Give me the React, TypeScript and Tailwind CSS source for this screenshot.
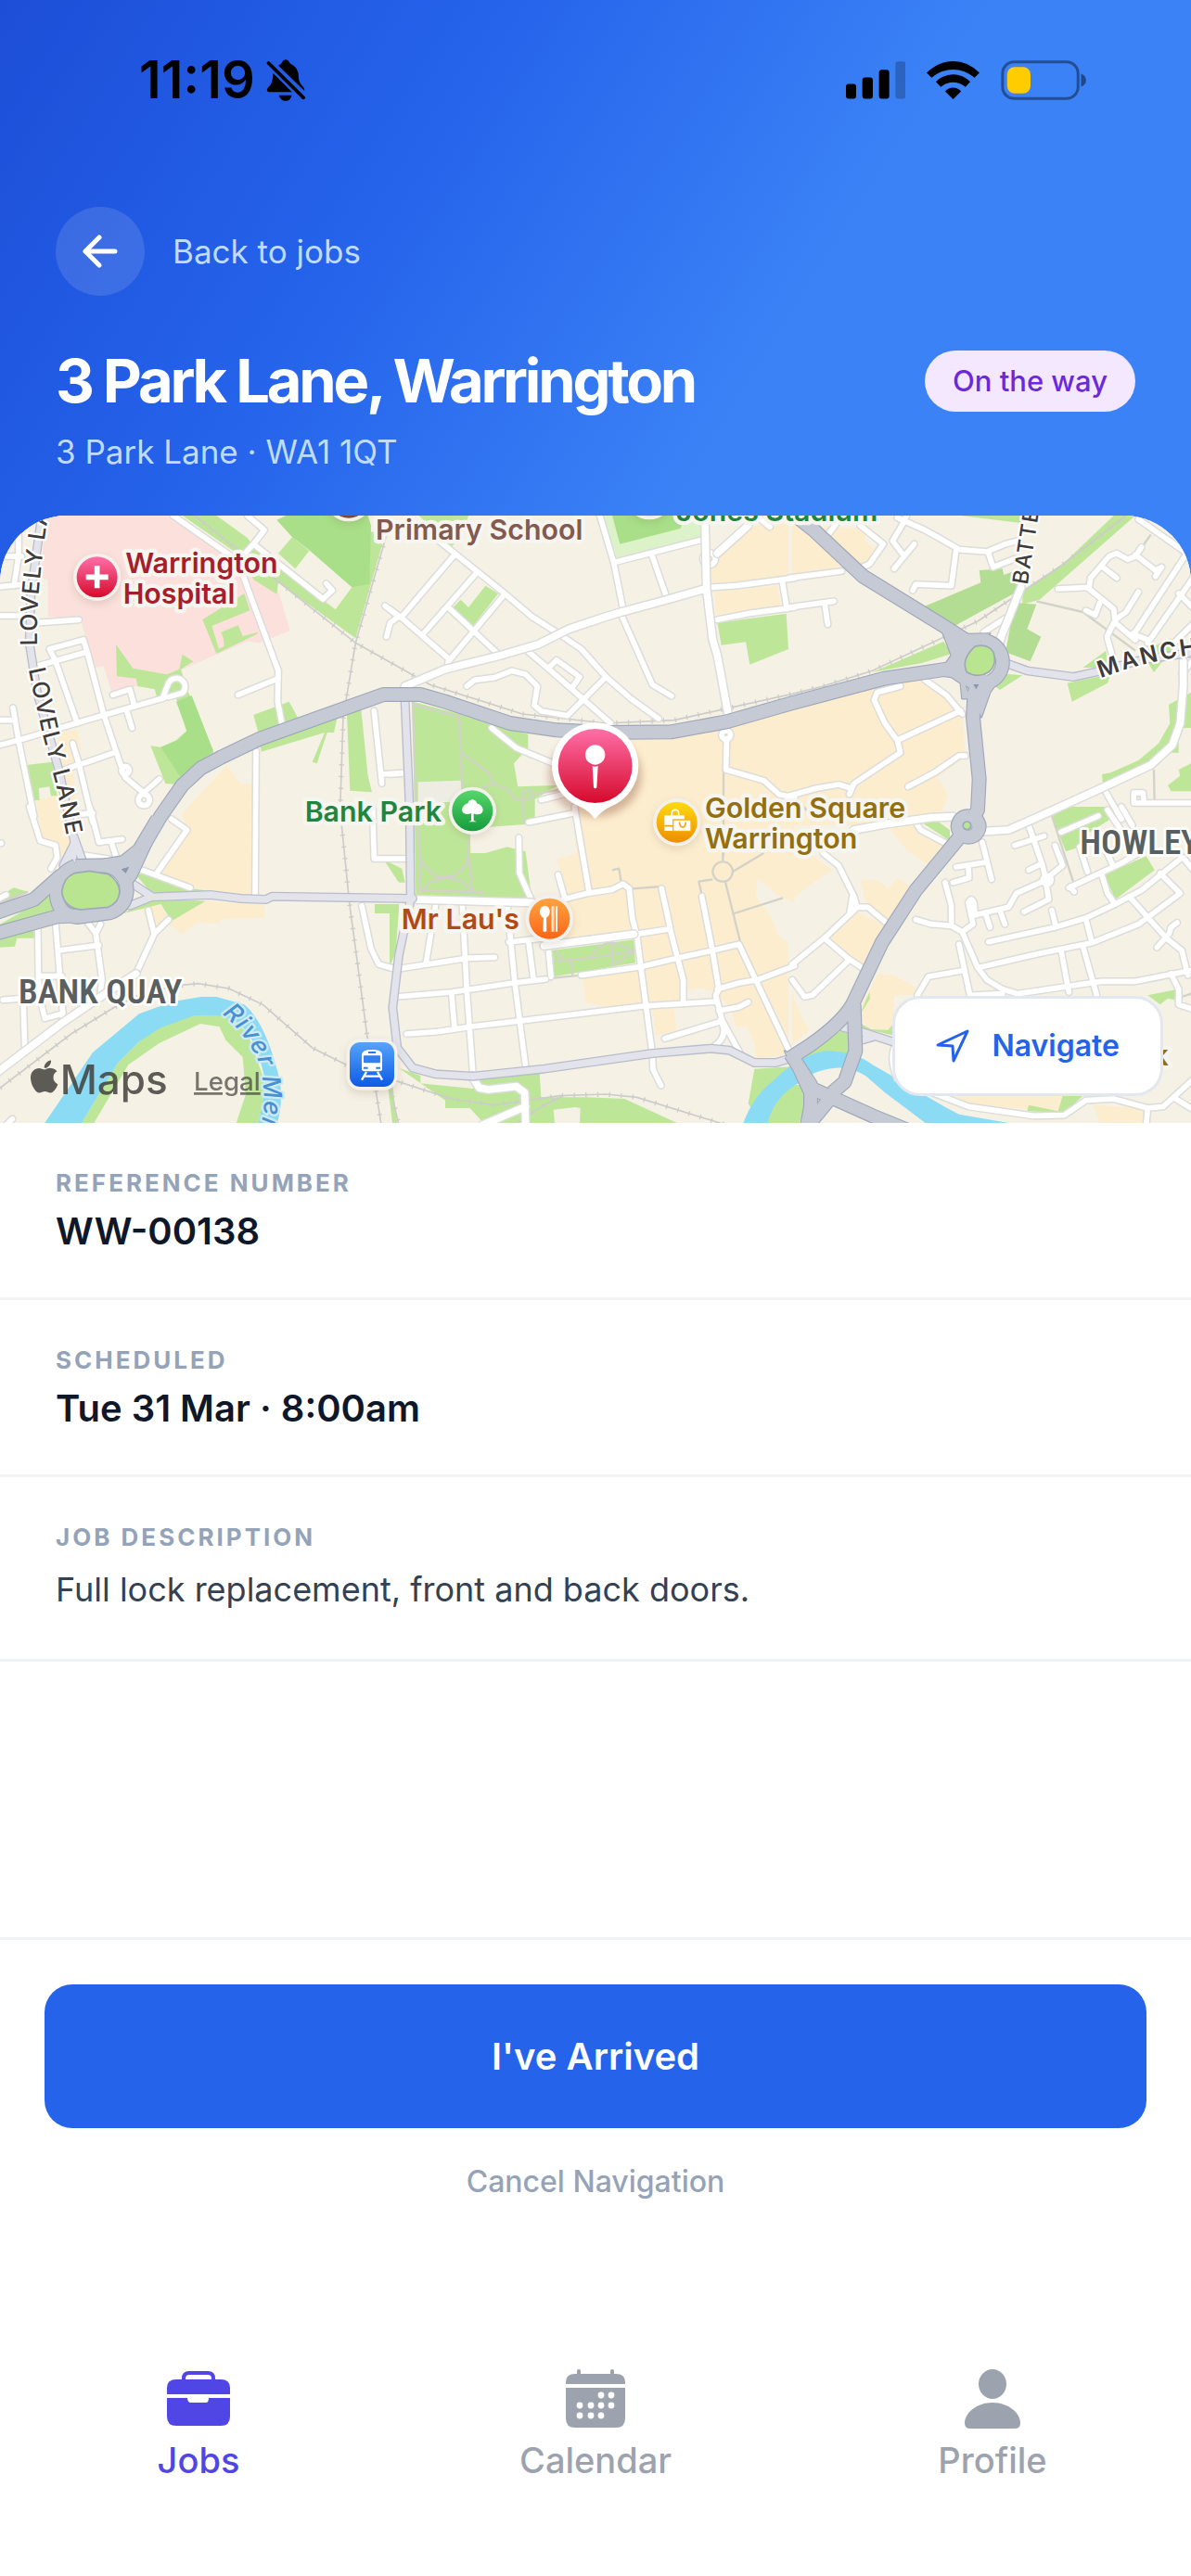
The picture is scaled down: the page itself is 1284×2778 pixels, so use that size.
import type { ReactNode } from "react";
import { FaApple } from "react-icons/fa";

/* ------------------------------------------------------------------ */
/* Map data. The map is split in six sheets; each path is expressed in */
/* the coordinates of its own sheet.                                   */
/* ------------------------------------------------------------------ */

type Sheet = "A" | "B" | "C" | "D" | "E" | "F";
type Shape = [Sheet, string];

const SHEETS: Record<Sheet, string> = {
  A: "translate(0 0)",
  B: "translate(1260 0)",
  C: "translate(2562 0)",
  D: "translate(0 990)",
  E: "translate(1260 990)",
  F: "translate(2562 990)",
};

const hospitalGround: Shape[] = [
  ["A", "M150 48L560 48L770 200L900 290L938 420L840 460L800 455L590 545L540 562L430 545L445 600L360 615L335 535L305 540L265 400L255 380L155 375L155 255L130 250Z"],
];

const commercial: Shape[] = [
  ["A", "M190 750L250 740L262 805L235 850L250 1020L120 1020L115 970L180 955Z"],
  ["A", "M735 855L775 915L815 915L815 1275L700 1275L500 1205L600 1060L590 1010Z"],
  ["D", "M440 320L520 320L545 360L665 305L855 315L855 360L718 362L712 378L640 375L587 412L555 385L500 380Z"],
  ["D", "M120 0L190 0L240 100L205 185L175 120L130 115Z"],
  ["B", "M1050 190L1160 85L1290 60L1290 250L1045 275L1035 235Z"],
  ["B", "M1050 295L1255 275L1265 340L1055 370Z"],
  ["B", "M560 770L780 775L920 765L1302 675L1302 1020L600 1010Z"],
  ["C", "M0 48L60 90L160 215L0 240Z"],
  ["C", "M80 85L240 90L235 130L265 155L245 200L180 215L90 110Z"],
  ["C", "M-10 680L280 600L430 580L500 630L550 690L560 830L470 895L505 955L480 1010L-10 1020Z"],
  ["E", "M540 170L605 150L590 0L1310 0L1310 310L1260 290L1190 230L1185 290L1230 350L1260 420L1290 440L1290 800L1185 815L1180 765L1155 712L1120 712L1105 655L1055 600L1000 585L950 600L950 630L830 640L690 645L635 632L625 550L810 520L800 415L520 450L580 300Z"],
  ["E", "M850 655L920 655L928 725L862 740Z"],
  ["F", "M315 70L400 50L510 120L450 195L370 140Z"],
  ["F", "M0 0L480 0L470 30L250 60L0 60Z"],
  ["F", "M0 110L130 205L60 250L0 300Z"],
  ["F", "M220 235L280 240L310 265L340 230L395 265L310 380L240 310Z"],
  ["F", "M125 425L210 340L300 385L230 520L180 490Z"],
  ["F", "M280 540L330 545L400 585L400 610L330 610L330 700L310 722L255 720L220 690L225 640Z"],
  ["F", "M480 935L880 935L860 985L570 965Z"],
  ["F", "M975 965L1140 975L1135 1023L995 1023Z"],
  ["F", "M0 600L30 680L55 720L0 770Z"],
];

const paleGreens: Shape[] = [
  ["B", "M690 48L1015 48L1015 120L730 190Z"],
];

const greens: Shape[] = [
  ["A", "M590 48L700 48L800 120L830 160L1085 352L1138 280L1200 100L1245 110L1150 445L900 265L895 302L820 255L780 180Z"],
  ["A", "M945 118L1000 162L955 220L900 170Z"],
  ["A", "M655 385L790 300L808 355L685 405L708 480L725 470L722 445L715 425L770 403L785 438L835 425L830 432L700 495Z"],
  ["A", "M375 465L430 542L540 562L580 545L590 497L625 520L585 545L605 610L690 810L690 830L590 890L570 918L535 915L487 793L520 797L570 775L603 745L570 640L510 645L500 610L445 600L440 575L378 568Z"],
  ["A", "M820 693L935 650L965 705L1090 705L1080 750L1058 750L1025 850L1010 845L1050 750L845 812L835 750Z"],
  ["A", "M1122 690L1168 675L1190 890L1203 943L1132 938Z"],
  ["A", "M85 855L170 845L185 955L165 955L160 925L125 930L128 968L112 970Z"],
  ["A", "M500 1020L580 910L600 930L540 1020Z"],
  ["B", "M75 650L225 690L330 725L448 755L448 800L402 850L415 925L545 920L470 965L470 1045L260 1060L262 1140L310 1140L380 1120L440 1135L460 1290L85 1290Z"],
  ["B", "M230 320L255 345L310 275L352 300L270 405L205 345Z"],
  ["B", "M1060 395L1283 365L1290 480L1165 530L1152 457L1073 467Z"],
  ["B", "M95 48L255 48L240 100L200 150Z"],
  ["C", "M545 48L740 48L740 72Z"],
  ["C", "M1040 48L1110 48L800 320L745 335L745 295L870 210Z"],
  ["C", "M260 555L490 455L515 495L420 525Z"],
  ["C", "M655 600L690 560L745 565L672 612Z"],
  ["C", "M890 590L1030 560L1020 590L905 650Z"],
  ["C", "M940 540L1015 485L1020 540Z"],
  ["C", "M1130 490L1225 445L1230 480L1170 555Z"],
  ["C", "M1218 660L1290 620L1290 735L1250 735L1250 815L1215 815L1100 880L1005 920L1002 885L1030 880L1120 840L1185 785L1222 720Z"],
  ["C", "M1215 920L1255 890L1250 870L1290 850L1290 940L1225 940Z"],
  ["D", "M0 380L165 285L175 335L0 400Z"],
  ["D", "M30 270L45 262L90 275L0 320L0 300Z"],
  ["D", "M0 420L115 385L112 425L55 425L48 452L0 455Z"],
  ["D", "M435 215L470 220L620 265L700 275L500 290Z"],
  ["D", "M400 345L520 315L555 370L665 305L480 295Z"],
  ["D", "M1212 315L1290 315L1290 345L1212 345Z"],
  ["D", "M465 90L525 0L545 0L480 80Z"],
  ["D", "M1255 910L1270 900L1285 1030L1270 1030Z"],
  ["D", "M260 1030L380 830L450 760L520 700L630 660L710 660L800 730L860 900L835 1030L762 1030L795 930L785 810L730 755L710 712L648 702L515 765L415 835L300 1030Z"],
  ["E", "M525 465L790 430L795 505L530 550Z"],
  ["E", "M0 320L30 330L20 470L0 520Z"],
  ["E", "M-20 170L40 200L50 245L30 245Z"],
  ["E", "M30 845L100 870L100 895L270 912L285 880L485 860L490 940L640 940L760 945L945 1030L615 1030L617 975L600 972L530 980L535 1030L310 1030L260 975L180 975L180 950Z"],
  ["E", "M1180 848L1310 840L1310 1030L1200 1030L1160 960Z"],
  ["F", "M840 30L900 0L1010 0L1030 40L950 90L930 130L885 145Z"],
  ["F", "M1010 220L1145 160L1172 205L1045 300Z"],
  ["F", "M410 45L460 40L510 75L510 110Z"],
  ["F", "M25 815L80 760L160 725L190 730L190 800Z"],
  ["F", "M220 700L255 720L310 722L330 700L330 740L220 715Z"],
  ["F", "M1150 610L1240 592L1238 625L1215 620L1190 640Z"],
  ["F", "M765 965L860 985L875 935L940 935L880 990L760 985Z"],
  ["F", "M-30 900L40 900L50 960L20 1030L-100 1030Z"],
  ["F", "M215 680L250 600L252 620Z"],
];

const deepGreens: Shape[] = [
  ["A", "M895 62L925 48L1190 48L1200 80L1195 270L1138 280L1000 160L945 118Z"],
  ["A", "M570 650L620 630L690 810L582 892L520 797L575 775L605 745Z"],
  ["B", "M720 48L960 48L940 90L745 140Z"],
];

const woods: Shape[] = [
  ["C", "M420 345L610 265L605 225L680 220L685 240L740 220L745 285L520 408Z"],
  ["C", "M720 330L790 335L760 415L805 440L770 520L690 490Z"],
];

const clearings: Shape[] = [
  ["B", "M92 910L230 905L235 975L92 975Z"],
];

const river: Shape[] = [
  ["D", "M140 1030L300 795L450 670L560 630L650 615L700 615L790 640Q850 690 890 830Q925 930 895 1030L835 1030L860 900Q840 790 800 730Q760 680 700 675L630 675L520 715L450 760L380 830L260 1030Z"],
  ["F", "M-160 1030Q-130 940 -60 885Q30 800 110 790Q200 790 260 835L400 915Q470 960 540 995L700 1023L440 1030Q380 985 300 925L240 872Q190 840 140 845Q70 850 20 895Q-60 940 -82 1030Z"],
];

const footpaths: Shape[] = [
  ["B", "M75 650L85 1000M78 660L225 700L238 990M232 815L320 880L335 915L375 930L405 965L430 970L435 1040M300 930L335 915M465 950L545 936"],
  ["B", "M445 936A16 16 0 1 0 446 936"],
  ["B", "M1080 870L1080 1150"],
  ["E", "M92 60L100 175L150 228L210 225L250 185L258 90M258 170L268 272M100 175L98 280M90 285L130 245L180 230L230 240L270 272M105 272L302 276L302 300"],
  ["E", "M535 500L640 490L790 467L720 515M650 487Q680 440 720 438L790 467M718 440L722 515M585 495L592 545M535 465L558 495"],
  ["E", "M1077 178A32 32 0 1 0 1078 178M1078 175L1078 100M1110 210L1210 150M1085 240L1135 440M1115 345L1272 295M1045 235L1000 242L1010 285M785 265L880 258M750 250L742 200L720 205M520 555L620 545"],
  ["C", "M790 325L940 360L1110 485M1110 180L1160 110M1170 870L1172 975M0 940L60 1020"],
  ["F", "M840 30L910 245M1260 615L1290 605"],
  ["D", "M-20 320L90 275"],
];

const rails: Shape[] = [
  ["A", "M630 48L1150 460L1390 595L1690 690L1960 720L2180 710L2562 625L2662 600L2822 550L3162 390L3432 210L3642 48"],
  ["A", "M1250 110L1150 460L1110 700L1100 1000L1130 1300L1190 1750L1235 2030"],
  ["D", "M0 910L230 735L400 630L560 580L640 572L740 588L850 640L1010 780L1130 840L1290 890L1460 945L1600 965L1810 935L1960 930L2060 940L2350 1030"],
  ["E", "M400 1030L500 965L560 935M0 900L30 1030"],
];

const minorRoads: Shape[] = [
  ["A", "M560 48L770 195L800 280L900 550L898 650L912 722M770 195L820 140M800 48L855 95L820 140L1045 318L1075 290L1055 268M770 628L900 575"],
  ["A", "M60 110L60 180L45 275M0 180L70 180M0 278L80 270M0 372L80 372M120 395L255 385"],
  ["A", "M160 480L270 450L285 500L335 690L375 810L405 895L465 945L515 900M160 480L180 520L250 720M120 535L280 490M465 950A18 18 0 1 0 466 950M405 860A12 12 0 1 0 406 860"],
  ["A", "M0 790L60 775L330 695L530 638M525 640L545 590A28 28 0 1 1 590 622L545 635"],
  ["A", "M365 628L420 610L435 665M410 680L427 735M0 710L45 710M42 670L60 775L110 1020M255 855L370 815M235 785L255 850L300 1040M210 870L250 855"],
  ["A", "M828 810L825 1280M1210 680L1235 915M1235 885L1310 880M1245 340L1290 375L1262 395L1250 440"],
  ["B", "M160 130L360 290L460 375L550 432L620 480L700 570L780 640L870 705"],
  ["B", "M210 175L120 280L40 375M280 235L105 435M370 305L190 520L185 545M0 350L40 380L190 510M190 345L350 495"],
  ["B", "M445 485L510 540L715 720M515 540L540 515L615 570L590 605M700 570L625 645L575 695L490 680L468 662L478 600L440 562L395 550L340 572L275 580L250 600"],
  ["B", "M680 48L725 200L755 350L750 370L850 595L912 632M725 200L1015 125M850 180L895 310M1033 168A20 20 0 1 0 1034 168M1230 85L1200 60"],
  ["B", "M1040 280L1120 275L1310 250M1270 260L1285 350M1060 385L1160 365L1310 345"],
  ["B", "M330 735L410 800L530 850M1090 770L1088 870L1210 905L1260 950L1310 960M1088 744A14 14 0 1 0 1089 744M0 885L45 882M490 968L600 940"],
  ["C", "M340 55L430 95L510 140L540 158L630 165L690 140L735 128M370 48L355 80L325 130L355 170M395 140L330 220M220 80L295 140L250 205L215 220M530 160L515 275L400 270L390 290M635 170L650 215L720 188"],
  ["C", "M-10 250L160 228M120 105L150 65M-10 345L135 325M105 330L115 400M690 380L620 425"],
  ["C", "M350 600L275 620L265 645L300 720L340 775L350 815L200 915L185 950M340 775L545 680M430 580L500 630L550 690M375 925L460 880L540 825L560 825M-10 955L80 930L150 918L190 930"],
  ["C", "M1120 60L1270 165M1130 150L1110 180L1085 190L1050 170L1025 180L965 250L960 285L1040 350L1045 395L1110 450M860 285L960 280M1005 215L1050 250M1110 175L1175 225L1195 215M1175 245L1195 215M950 355L980 370L995 330M1045 385L1080 360L1120 295M1040 395L1018 440L1035 500"],
  ["C", "M1100 440L1270 180M1150 460L1310 230M1250 300L1310 360M1100 430L1150 450M1240 455L1310 385M1010 935L1065 1030M1310 978L1140 978L1105 978L1105 945L1135 945L1138 978M1310 500L1260 560"],
  ["D", "M95 0L130 110L180 125L185 165L165 200M290 0L320 115L395 105M255 25L300 20M360 115L375 160M260 155L390 175M460 205L615 262M510 210L605 75L555 40M0 118L4 118"],
  ["D", "M122 380L125 600L145 685L200 670M180 380L205 690M280 370L310 410L330 560L325 600M190 465L320 448M310 410L325 380M440 540L500 410L545 365M480 335L498 410M10 625L75 620L80 780M-10 300L20 285M0 1050L40 1010M130 548L200 548"],
  ["D", "M1170 320L1200 460L1225 510L1280 525M1205 0L1210 168L1320 168"],
  ["E", "M450 50L590 22M598 0L645 275M560 300L640 280L720 268L755 250L775 265L785 360L800 420L830 650L850 800L852 850L878 902M545 220L568 300M418 100L420 215L460 305"],
  ["E", "M880 265L908 395L800 412L500 450M385 438L500 425M908 400L950 560L950 630M1010 290L1045 470L1065 590L1055 610L1075 690L1135 800"],
  ["E", "M0 520L30 524L250 490L340 487M150 310L118 505M235 310L250 600L270 870M380 310L405 570L440 840M450 440L465 555M512 440L522 550M20 615L200 600L400 570L505 558M200 600L210 715"],
  ["E", "M55 735L155 728L260 712L430 692L820 645L1060 630M620 545L810 518L930 490L1045 465L1130 445L1290 785M1060 590L1130 570L1190 560L1310 515M1065 660L1130 648L1160 632M890 750L1070 695M1070 690Q1100 740 1050 775"],
  ["F", "M400 50L415 75L510 125M100 150L150 190L200 290L210 325L110 420L0 510M185 350L195 290M210 325L245 325L310 380M110 430L180 490L225 520M180 500L65 610L40 615L0 560"],
  ["F", "M400 365L450 380L515 385L550 405L600 520L630 560L680 590L730 605L1000 565L1110 565L1310 526M495 245L515 320L515 385M530 195L625 180M615 115L645 235M570 195L572 230L520 245"],
  ["F", "M550 405L585 380L570 310Q580 290 588 310L592 350L700 325L725 280L815 240M625 345L640 390M672 335L688 380M750 340L830 300L820 240M765 60L810 190L820 235M720 125L815 95M765 205L805 185M850 125L875 190L825 230M824 224A13 13 0 1 0 825 224"],
  ["F", "M840 335L852 385M635 437L850 390L950 360L1045 315L1130 270L1260 165M605 520L800 475L970 440L1120 380L1255 280L1190 215M870 465L895 600M940 450L985 610M950 365L970 440M1090 290L1210 425L1260 465L1280 545M1180 455L1220 410L1225 390L1245 375"],
  ["F", "M895 262L1060 185L1130 145M912 275L900 258M1000 215L1020 280L1045 315M540 445L575 610M405 610L440 550L550 530M580 610L680 605M1225 540L1250 590L1250 640L1310 660M870 82L990 30M930 130L955 210M1020 10L1060 70M1010 130L1035 185M1065 0L1100 60M1265 165L1310 220"],
  ["F", "M330 780Q315 820 340 880M440 920L570 970L780 1000L880 998L950 950L1040 945L1150 975L1200 970L1310 870M1240 945L1290 975M1150 975L1145 1030"],
];

const wideRoads: Shape[] = [
  ["B", "M50 600L180 545L360 500L480 465L580 415L700 375L750 360L880 325L1020 285M1020 60L1025 285L1045 450L1060 500L1095 690M1060 170L1160 80"],
  ["C", "M740 280L680 430L670 460M1265 520L1265 600L1255 720L1230 790L1160 855L1000 930L780 1030L700 1065L620 1070"],
  ["D", "M-10 860L200 700L325 615L440 540"],
  ["E", "M85 300L460 310M500 450L790 412M300 1030L440 970M265 870L290 910L320 915L410 905L437 925L440 1030"],
  ["F", "M200 75L310 55L450 35L520 32"],
];

const secondaryRoads: Shape[] = [
  ["A", "M135 48L100 300L95 460L120 620L190 870L240 1100L235 1160M240 1090L265 1160M240 1110L205 1180"],
  ["B", "M50 650L65 1000L68 1290L30 1470L10 1640L25 1770L75 1835L150 1855L270 1862L500 1838L850 1788L1040 1772L1100 1778L1180 1818L1250 1818L1310 1800"],
  ["D", "M430 250L490 290M420 320L490 292L680 285L780 297L860 300L880 290L1335 297"],
  ["C", "M690 525L760 550L910 570L1000 550L1130 515L1300 490"],
  ["F", "M150 710L230 730L340 765M150 700L200 690M225 755L260 745"],
];

const trunkRoads: Shape[] = [
  ["A", "M450 1140L520 1020L590 920L650 865L715 830L840 770L1240 627L1360 627L1440 650L1650 720L1800 742L1960 750L2170 748L2350 715L2560 655L2860 575L3080 542"],
  ["C", "M10 48L70 95L230 245L490 405L560 450"],
  ["C", "M620 560L590 620L585 700L605 900L600 1000L575 1050"],
  ["C", "M610 452A70 70 0 1 0 611 452"],
  ["D", "M245 192L340 190Q410 205 410 275Q405 325 355 343L250 357Q185 350 182 280Q185 215 245 192M-20 345L110 300L200 220M-20 412L185 355L260 352"],
  ["D", "M340 190L400 180L450 140L510 40"],
  ["F", "M570 30A34 34 0 1 0 571 30M540 100L400 270L290 440L195 640Q160 700 60 770L-10 815M200 640L205 790L170 890L130 925M-5 800L60 900L60 970L45 1050M60 910L260 1000L370 1045M60 1020L130 935"],
];

const trunkFills: Shape[] = [
  ["C", "M475 395L560 432L640 430L575 480L560 600L580 640L550 640L545 590L515 570L470 565L515 500Z"],
  ["C", "M650 560L690 550L640 620L612 700L580 620Z"],
  ["D", "M340 170L400 162L445 135L480 90L500 100L440 230L415 262L370 200Z"],
  ["F", "M-24 790L20 820L70 890L60 960L35 920Z"],
];

const trunkIslands: Shape[] = [
  ["C", "M590 472Q630 460 650 488Q665 530 635 555Q600 575 565 555Q545 515 590 472Z"],
  ["D", "M240 215L290 208L350 218Q385 240 387 275Q385 310 350 325L260 333Q205 325 200 275Q205 230 240 215Z"],
  ["F", "M565 48A13 13 0 1 0 566 48Z"],
];

const draw = (shapes: Shape[]) =>
  shapes.map(([sheet, d], i) => <path key={sheet + i} d={d} transform={SHEETS[sheet]} />);

function Roads({ shapes, casing, fill, outer, inner }: { shapes: Shape[]; casing: string; fill: string; outer: number; inner: number }) {
  return (
    <g fill="none" strokeLinecap="round" strokeLinejoin="round">
      <g stroke={casing} strokeWidth={outer}>{draw(shapes)}</g>
      <g stroke={fill} strokeWidth={inner}>{draw(shapes)}</g>
    </g>
  );
}

function Poi({ x, y, fill, children }: { x: number; y: number; fill: string; children?: ReactNode }) {
  return (
    <g transform={`translate(${x} ${y})`}>
      <circle r="78" cy="10" fill="#5b4b30" opacity="0.14" filter="url(#soft)" />
      <circle r="77" fill="#f4f1ec" />
      <circle r="66" fill={fill} />
      {children}
    </g>
  );
}

function MapView() {
  return (
    <svg viewBox="0 48 3852 1965" preserveAspectRatio="xMidYMid slice" className="block h-full w-full" role="img" aria-label="Map of Warrington">
      <defs>
        <filter id="soft" x="-30%" y="-30%" width="160%" height="160%"><feGaussianBlur stdDeviation="12" /></filter>
        <linearGradient id="pink" x2="0" y2="1"><stop stopColor="#ff6fa8" /><stop offset="1" stopColor="#d50a2c" /></linearGradient>
        <linearGradient id="leaf" x2="0" y2="1"><stop stopColor="#56d66c" /><stop offset="1" stopColor="#169c3c" /></linearGradient>
        <linearGradient id="gold" x2="0" y2="1"><stop stopColor="#fddc12" /><stop offset="1" stopColor="#ef8c00" /></linearGradient>
        <linearGradient id="orange" x2="0" y2="1"><stop stopColor="#ffa442" /><stop offset="1" stopColor="#fb6514" /></linearGradient>
        <linearGradient id="transit" x2="0" y2="1"><stop stopColor="#57a3fb" /><stop offset="1" stopColor="#0d5be3" /></linearGradient>
        <path id="lovely1" d="M120 468Q115 300 160 20" />
        <path id="lovely2" d="M92 545L135 745L180 915L225 1130" />
        <path id="battersby" d="M3323 273L3372 -40" />
        <path id="manchester" d="M3560 574Q3700 520 3860 498L3980 480" />
        <path id="mersey" d="M718 1660Q800 1730 835 1815Q860 1900 852 1980L830 2080" />
      </defs>

      <rect x="-100" y="0" width="4100" height="2100" fill="#f6f1e5" />
      <g fill="#fbe0dc">{draw(hospitalGround)}</g>
      <g fill="#fdedcf">{draw(commercial)}</g>
      <g fill="#dcf2c8">{draw(paleGreens)}</g>
      <g fill="#bee699">{draw(greens)}</g>
      <g fill="#a9df88">{draw(deepGreens)}</g>
      <g fill="#b3dd92">{draw(woods)}</g>
      <g fill="#eeede4">{draw(clearings)}</g>
      <g fill="#8bdbf5">{draw(river)}</g>

      <g fill="none" strokeLinejoin="round" stroke="#d3d2c9" strokeWidth="7">{draw(footpaths)}</g>
      <g fill="none" stroke="#cdccca" strokeWidth="5">{draw(rails)}</g>
      <g fill="none" stroke="#cdccca" strokeWidth="16" strokeDasharray="4 34">{draw(rails)}</g>

      <Roads shapes={minorRoads} casing="#dcdcda" fill="#ffffff" outer={26} inner={17} />
      <Roads shapes={wideRoads} casing="#dcdcda" fill="#ffffff" outer={32} inner={23} />
      <Roads shapes={secondaryRoads} casing="#b9bdcb" fill="#e3e3eb" outer={30} inner={22} />

      <g fill="none" strokeLinejoin="round" stroke="#9fa8bb" strokeWidth="48">{draw(trunkRoads)}</g>
      <g fill="#c6cad4" stroke="#9fa8bb" strokeWidth="7" strokeLinejoin="round">{draw(trunkFills)}</g>
      <g fill="none" strokeLinejoin="round" stroke="#c6cad4" strokeWidth="41">{draw(trunkRoads)}</g>
      <g fill="#c6cad4">{draw(trunkFills)}</g>
      <g fill="#b9e490" stroke="#9fa8bb" strokeWidth="5">{draw(trunkIslands)}</g>
      <path d="M3148 594L3166 594L3157 610ZM392 1192L418 1184L407 1206Z" fill="#8c97ad" />

      {/* road and river names */}
      <g className="font-[Inter,sans-serif]" fontWeight="500" fill="#3f3c3a" stroke="#ffffff" strokeWidth="14" strokeLinejoin="round" paintOrder="stroke" letterSpacing="5">
        <text fontSize="75"><textPath href="#lovely1">LOVELY LANE</textPath></text>
        <text fontSize="75"><textPath href="#lovely2">LOVELY LANE</textPath></text>
        <text fontSize="70"><textPath href="#battersby">BATTERSBY</textPath></text>
        <text fontSize="75" fontWeight="600" letterSpacing="8"><textPath href="#manchester">MANCHESTER</textPath></text>
        <text fontSize="80" fontStyle="italic" fill="#4a8fd2" stroke="#cbebf4"><textPath href="#mersey">River Mersey</textPath></text>
      </g>

      {/* districts */}
      <g className="font-['Liberation_Sans_Narrow','Roboto_Condensed',Roboto,sans-serif]" fontSize="111" fontWeight="600" fill="#5a5f60" stroke="#ffffff" strokeWidth="16" strokeLinejoin="round" paintOrder="stroke">
        <text x="60" y="1627">BANK QUAY</text>
        <text x="3493" y="1144">HOWLEY</text>
      </g>

      {/* places */}
      <g className="font-[Inter,sans-serif]" fontSize="91" fontWeight="600" stroke="#f6f5f0" strokeWidth="26" strokeLinejoin="round" paintOrder="stroke">
        <text x="406" y="234" fill="#a61e2c">Warrington</text>
        <text x="398" y="332" fill="#a61e2c">Hospital</text>
        <text x="1215" y="126" fill="#835a4f">Primary School</text>
        <text x="2186" y="67" fill="#1e863f">Jones Stadium</text>
        <text x="1428" y="1039" textAnchor="end" fill="#1e863f">Bank Park</text>
        <text x="2280" y="1026" fill="#93700f">Golden Square</text>
        <text x="2280" y="1124" fill="#93700f">Warrington</text>
        <text x="1680" y="1387" textAnchor="end" fill="#b34a14">Mr Lau's</text>
        <text x="3779" y="1828" textAnchor="end" fill="#93700f">Park</text>
      </g>

      <Poi x={314} y={247} fill="url(#pink)"><path d="M0 -36V36M-36 0H36" stroke="#fff" strokeWidth="17" /></Poi>
      <Poi x={1128} y={-10} fill="#7b4a3c" />
      <Poi x={2100} y={-16} fill="#d7d7d3" />
      <Poi x={1528} y={1003} fill="url(#leaf)">
        <path d="M0 -37Q13 -34 14 -24Q30 -20 34 -5Q34 10 20 11Q8 13 4 8L4 32L14 36H-12L-4 32L-4 8Q-16 13 -26 9Q-36 4 -33 -8Q-28 -20 -15 -24Q-13 -34 0 -37Z" fill="#fff" />
      </Poi>
      <Poi x={2189} y={1040} fill="url(#gold)">
        <path d="M-40 -22H24V28H-40Z" fill="#fff" />
        <path d="M-16 -22V-30Q-15 -40 -4 -40Q6 -40 6 -28V-22" fill="none" stroke="#fff" strokeWidth="5" />
        <path d="M-40 12H-12" stroke="#f0a400" strokeWidth="5" />
        <path d="M-12 -8H46V29H-12Z" fill="#fff" stroke="#f5b200" strokeWidth="4" />
        <path d="M8 0Q10 16 19 16Q28 16 29 0" fill="none" stroke="#f3a600" strokeWidth="5" />
      </Poi>
      <Poi x={1777} y={1352} fill="url(#orange)">
        <ellipse cx="-15" cy="-22" rx="16" ry="20" fill="#fff" />
        <path d="M-19 -8L-10 -8L-9 40Q-15 46 -21 40Z" fill="#fff" />
        <path d="M10 -40V42M23 -40V42" stroke="#fff" strokeWidth="6" />
        <path d="M16 -40V42" stroke="#fff" strokeWidth="3" opacity="0.5" />
      </Poi>

      {/* railway station */}
      <g transform="translate(1203 1824)">
        <rect x="-84" y="-74" width="168" height="170" rx="44" fill="#5b4b30" opacity="0.15" filter="url(#soft)" />
        <rect x="-83" y="-83" width="166" height="166" rx="44" fill="#f4f1ec" />
        <rect x="-72" y="-72" width="144" height="144" rx="34" fill="url(#transit)" />
        <path d="M-33 -32Q-32 -48 0 -48Q32 -48 33 -32V16Q32 22 24 22H-24Q-32 22 -33 16Z" fill="#fff" />
        <rect x="-27" y="-29" width="54" height="24" rx="3" fill="#3280f2" />
        <path d="M-12 -39H12M-27 11H-13M13 11H27" stroke="#2a78ef" strokeWidth="6" />
        <path d="M-18 24L-33 50M18 24L33 50M-26 38H26" stroke="#fff" strokeWidth="7" fill="none" />
      </g>

      {/* destination pin */}
      <g transform="translate(1925 858)">
        <ellipse cx="0" cy="30" rx="150" ry="135" fill="#7a3b24" opacity="0.32" filter="url(#soft)" />
        <path d="M-140 0A140 140 0 1 1 140 0A140 140 0 0 1 50 131Q20 145 0 172Q-20 145 -50 131A140 140 0 0 1 -140 0Z" fill="#fff" />
        <circle r="120" fill="url(#pink)" />
        <circle cy="-36" r="32" fill="#fff" />
        <path d="M-9 0Q0 4 9 0L5 70Q0 76 -5 70Z" fill="#fff" />
      </g>

      {/* attribution */}
      <FaApple x={83} y={1803} size={120} color="#5d5b55" />
      <g className="font-[Inter,sans-serif]" fill="#3d3b38">
        <text x="194" y="1920" fontSize="132" fontWeight="500" opacity="0.82">Maps</text>
        <text x="627" y="1908" fontSize="83" fontWeight="500" opacity="0.68" textDecoration="underline">Legal</text>
      </g>
    </svg>
  );
}

/* ------------------------------------------------------------------ */
/* Icons                                                               */
/* ------------------------------------------------------------------ */

function BellOffIcon() {
  return (
    <svg viewBox="0 0 124 135" className="h-[45px] w-[43px]" aria-hidden="true">
      <path d="M37 20Q48 14 49 9Q52 1 60 1Q69 1 72 9Q74 14 84 19Q102 32 102 55Q102 76 118 90Q122 95 121 102Z" />
      <path d="M20 45L81 106H10Q0 106 0 98Q1 92 8 86Q19 76 20 45Z" />
      <path d="M39 116H80Q77 134 60 134Q43 134 39 116Z" />
      <path d="M5 12L118 124" stroke="#000" strokeWidth="11" strokeLinecap="round" />
    </svg>
  );
}

function SignalIcon() {
  return (
    <svg viewBox="0 0 192 122" className="h-[41px] w-[64px]" aria-hidden="true">
      <rect y="73" width="33" height="48" rx="9" />
      <rect x="53" y="52" width="34" height="69" rx="9" />
      <rect x="107" y="27" width="33" height="94" rx="9" />
      <rect x="160" width="33" height="121" rx="9" opacity="0.22" />
    </svg>
  );
}

function WifiIcon() {
  return (
    <svg viewBox="0 0 172 124" className="h-[41px] w-[57px]" aria-hidden="true">
      <path d="M0 38Q37 0 86 0Q135 0 172 38L156 54Q125 27 86 27Q47 27 16 54Z" />
      <path d="M30 67Q54 43 86 43Q118 43 142 67L126 84Q108 69 86 69Q64 69 46 84Z" />
      <path d="M60 98Q71 86 86 86Q101 86 112 98L86 124Z" />
    </svg>
  );
}

function BatteryIcon() {
  return (
    <svg viewBox="0 0 280 130" className="h-[43px] w-[93px]" aria-hidden="true">
      <rect x="5" y="5" width="246" height="120" rx="38" fill="none" stroke="#000" strokeOpacity="0.4" strokeWidth="9" />
      <path d="M261 44Q277 50 277 65Q277 80 261 86Z" fillOpacity="0.45" />
      <rect x="20" y="22" width="76" height="86" rx="24" fill="#ffcc00" />
    </svg>
  );
}

function BriefcaseIcon() {
  return (
    <svg viewBox="0 0 68 60" className="h-[60px] w-[68px]" fill="currentColor" aria-hidden="true">
      <path d="M18 12V8Q18 2 24 2H44Q50 2 50 8V12" fill="none" stroke="currentColor" strokeWidth="4" />
      <path d="M0 25V18Q0 9 10 9H58Q68 9 68 18V25Z" />
      <path d="M0 29H22Q22 34 26 34H42Q45 34 45 29H68V49Q68 59 58 59H10Q0 59 0 49Z" />
    </svg>
  );
}

const CALENDAR_DAYS = [[38, 28], [49, 28], [15, 39], [27, 39], [38, 39], [49, 39], [15, 50], [27, 50], [38, 50]];

function CalendarIcon() {
  return (
    <svg viewBox="0 0 64 64" className="h-[64px] w-[64px]" fill="currentColor" aria-hidden="true">
      <path d="M14 8V2M50 8V2" stroke="currentColor" strokeWidth="4" strokeLinecap="round" />
      <path d="M0 16V14Q0 5 10 5H54Q64 5 64 14V16Z" />
      <path d="M0 20H64V53Q64 63 54 63H10Q0 63 0 53Z" />
      <g fill="#fff">{CALENDAR_DAYS.map(([x, y]) => <circle key={`${x}-${y}`} cx={x} cy={y} r="3.4" />)}</g>
    </svg>
  );
}

function ProfileIcon() {
  return (
    <svg viewBox="0 0 60 64" className="h-[64px] w-[60px]" fill="currentColor" aria-hidden="true">
      <ellipse cx="30" cy="16" rx="15" ry="16" />
      <path d="M30 36C47 36 60 47 60 58Q60 64 54 64H6Q0 64 0 58C0 47 13 36 30 36Z" />
    </svg>
  );
}

/* ------------------------------------------------------------------ */
/* Screen                                                              */
/* ------------------------------------------------------------------ */

function Detail({ label, children }: { label: string; children: ReactNode }) {
  return (
    <div className="border-b-[3px] border-[#f1f2f7] px-[60px] py-[47px]">
      <dt className="mb-[10px] text-[26px] leading-[36px] font-bold tracking-[3px] text-[#94a3b8] uppercase">{label}</dt>
      <dd>{children}</dd>
    </div>
  );
}

function Tab({ label, icon, active }: { label: string; icon: ReactNode; active?: boolean }) {
  return (
    <a href="#" aria-current={active ? "page" : undefined} className={active ? "flex flex-1 flex-col items-center text-[#4f46e5]" : "flex flex-1 flex-col items-center text-[#9ca3af]"}>
      <span className="flex h-[64px] items-center">{icon}</span>
      <span className="mt-[10px] text-[38px] leading-[48px] font-medium">{label}</span>
    </a>
  );
}

export default function App() {
  return (
    <div className="flex min-h-screen flex-col bg-white font-[Inter,sans-serif]">
      <header className="bg-[linear-gradient(122deg,#1d4ed8_0%,#2563eb_32%,#3b82f6_64%)] px-[60px] pb-[119px]">
        <div className="flex h-[172px] items-center justify-between pr-[52px] pl-[90px] text-black">
          <div className="flex items-center gap-[12px]">
            <span className="text-[56px] leading-[60px] font-semibold">11:19</span>
            <BellOffIcon />
          </div>
          <div className="flex items-center gap-[23px]">
            <SignalIcon />
            <WifiIcon />
            <BatteryIcon />
          </div>
        </div>

        <button type="button" className="mt-[51px] flex items-center gap-[30px]">
          <span className="flex size-[96px] items-center justify-center rounded-full bg-white/12">
            <svg viewBox="0 0 38 36" className="h-[36px] w-[38px]" fill="none" stroke="#fff" strokeWidth="5" strokeLinecap="round" strokeLinejoin="round" aria-hidden="true">
              <path d="M18 3L3 18L18 33M3 18H35" />
            </svg>
          </span>
          <span className="text-[35px] leading-[44px] text-[#bfdbfe]">Back to jobs</span>
        </button>

        <div className="mt-[52px] flex h-[80px] items-center justify-between">
          <h1 className="text-[65px] leading-[80px] font-bold tracking-tighter text-white">3 Park Lane, Warrington</h1>
          <span className="rounded-full bg-[#f3e8ff] px-[30px] py-[12px] text-[31px] leading-[42px] font-medium text-[#6d28d9]">On the way</span>
        </div>
        <p className="mt-[14px] text-[35px] leading-[44px] text-[#bfdbfe]">3 Park Lane · WA1 1QT</p>
      </header>

      <main className="-mt-[72px] flex flex-1 flex-col overflow-hidden rounded-t-[72px] bg-white">
        <section className="relative h-[655px]" aria-label="Job location">
          <MapView />
          <button type="button" className="absolute right-[30px] bottom-[29px] flex items-center gap-[24px] rounded-[30px] border-[3px] border-[#e2e8f0] bg-white px-[44px] py-[30px] text-[32px] leading-[42px] font-semibold text-[#2563eb]">
            <svg viewBox="0 0 36 36" className="size-[36px]" fill="none" stroke="currentColor" strokeWidth="3" strokeLinejoin="round" aria-hidden="true">
              <path d="M34 2L19 34L18 18L2 17Z" />
            </svg>
            Navigate
          </button>
        </section>

        <dl>
          <Detail label="Reference number">
            <span className="block text-[40px] leading-[48px] font-semibold text-[#0f172a]">WW-00138</span>
          </Detail>
          <Detail label="Scheduled">
            <span className="block text-[40px] leading-[48px] font-semibold text-[#0f172a]">Tue 31 Mar · 8:00am</span>
          </Detail>
          <Detail label="Job description">
            <span className="block text-[36px] leading-[56px] text-[#334155]">Full lock replacement, front and back doors.</span>
          </Detail>
        </dl>
      </main>

      <div className="flex flex-col items-center border-t-[3px] border-[#f1f2f7] px-[48px] pt-[48px] pb-[60px]">
        <button type="button" className="h-[155px] w-full rounded-[30px] bg-[#2563eb] text-[40px] font-semibold text-white">I've Arrived</button>
        <button type="button" className="mt-[28px] text-[32px] leading-[60px] font-medium text-[#94a3b8]">Cancel Navigation</button>
      </div>

      <nav className="flex pt-[112px] pb-[101px]" aria-label="Main">
        <Tab label="Jobs" icon={<BriefcaseIcon />} active />
        <Tab label="Calendar" icon={<CalendarIcon />} />
        <Tab label="Profile" icon={<ProfileIcon />} />
      </nav>
    </div>
  );
}
